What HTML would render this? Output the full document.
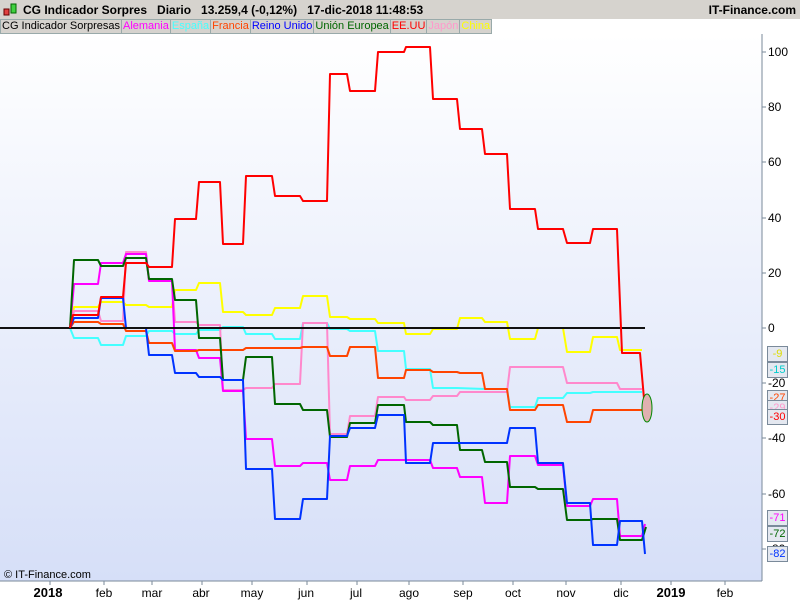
<!DOCTYPE html><html><head><style>
body{margin:0;width:800px;height:600px;overflow:hidden;font-family:"Liberation Sans",sans-serif;background:#fff;position:relative}
.t{position:absolute;left:0;top:0;width:800px;height:19px;background:#d6d3ce;font-size:12px}
.lg{position:absolute;left:0;top:19px;height:15px;font-size:11px;display:flex;background:#d6d3ce}
.lg span{border:1px solid #9aa;border-left:none;padding:0 1px;line-height:13px;background:#d6d3ce}
.lab{position:absolute;left:767px;width:19px;height:14px;border:1px solid #7a8a9a;background:#e4e8f0;font-size:11px;line-height:14px;text-align:center}
</style></head><body>
<div class="t"><svg style="position:absolute;left:3px;top:2px" width="14" height="16"><rect x="1" y="7" width="5" height="6" fill="#e04040" stroke="#600"/><rect x="8" y="2" width="5" height="9" fill="#40d040" stroke="#060"/></svg>
<b style="position:absolute;left:23px;top:3px;font-weight:bold">CG Indicador Sorpres&nbsp;&nbsp;&nbsp;Diario&nbsp;&nbsp;&nbsp;13.259,4 (-0,12%)&nbsp;&nbsp;&nbsp;17-dic-2018 11:48:53</b>
<b style="position:absolute;right:4px;top:3px">IT-Finance.com</b></div>
<div class="lg"><span style="border-left:1px solid #9aa">CG Indicador Sorpresas</span><span style="color:#f0f">Alemania</span><span style="color:#4ff">España</span><span style="color:#f40">Francia</span><span style="color:#00f">Reino Unido</span><span style="color:#060">Unión Europea</span><span style="color:#f00">EE.UU</span><span style="color:#f9c">Japón</span><span style="color:#ff0">China</span></div>
<svg style="position:absolute;left:0;top:34px" width="800" height="566">
<defs><linearGradient id="g" x1="0" y1="0" x2="0" y2="1"><stop offset="0" stop-color="#fff"/><stop offset="1" stop-color="#d6dff8"/></linearGradient></defs>
<g transform="translate(0,-34)">
<rect x="0" y="34" width="762" height="547" fill="url(#g)"/>
<line x1="762" y1="34" x2="762" y2="581" stroke="#7a8a9a"/>
<line x1="0" y1="581" x2="762" y2="581" stroke="#7a8a9a"/>
<g fill="none" stroke-width="2" stroke-linejoin="round">
<polyline stroke="#ffff00" points="0,328 70,328 74,307 98,307 101,302 123,302 126,305 146,305 149,307 172,307 175,290 196,290 199,283 220,283 223,312 243,312 246,315 272,315 275,308 300,308 303,296 327,296 330,317 347,317 350,319 375,319 378,323 404,323 406,334 430,334 433,329 457,329 460,318 482,318 485,322 507,322 510,339 535,339 538,328 563,328 567,352 590,352 593,337 617,337 620,350 642,350"/>
<polyline stroke="#44ffff" points="70,328 74,338 98,338 101,345 123,345 126,336 146,336 149,331 172,331 175,334 196,334 199,330 220,330 223,327 243,327 246,334 272,334 275,339 300,339 303,323 327,323 330,329 347,329 350,331 375,331 378,351 404,351 406,369 430,369 433,388 457,388 485,389 507,389 510,407 535,407 538,398 563,398 567,393 590,393 593,392 642,392"/>
<polyline stroke="#ff88cc" points="70,328 74,311 98,311 101,321 123,321 126,252 146,252 149,280 172,280 175,322 196,322 199,325 220,325 223,390 243,390 246,388 272,388 275,384 300,384 303,323 327,323 330,434 347,434 350,416 375,416 378,397 404,397 406,400 430,400 433,396 457,396 460,392 507,392 510,367 563,367 567,383 617,383 620,389 642,389"/>
<polyline stroke="#ff00ff" points="70,328 74,284 98,284 101,263 123,263 126,254 146,254 149,281 172,281 175,350 196,350 199,358 220,358 223,391 243,391 246,439 272,439 275,466 300,466 303,463 327,463 330,480 347,480 350,466 375,466 378,460 430,460 433,468 457,468 460,477 482,477 485,503 507,503 510,456 535,456 538,465 563,465 567,506 590,506 593,499 617,499 620,536 642,536 645,524"/>
<polyline stroke="#ff4400" points="70,328 74,322 98,322 101,324 123,324 126,331 146,331 149,343 172,343 175,351 196,351 199,350 243,350 246,348 300,348 303,347 327,347 330,356 347,356 350,347 375,347 378,378 404,378 406,370 430,370 433,372 457,372 460,373 482,373 485,389 507,389 510,410 535,410 538,405 563,405 567,422 590,422 593,410 642,410"/>
<polyline stroke="#006600" points="70,328 74,260 98,260 101,266 123,266 126,258 146,258 149,279 172,279 175,300 196,300 199,338 220,338 223,380 243,380 246,357 272,357 275,404 300,404 303,410 327,410 330,437 347,437 350,423 375,423 378,405 404,405 406,422 430,422 433,425 457,425 460,450 482,450 485,462 507,462 510,487 535,487 538,489 563,489 567,520 590,520 593,519 617,519 620,540 642,540 646,527"/>
<polyline stroke="#0033ff" points="70,328 74,318 98,318 101,298 123,298 126,328 146,328 149,355 172,355 175,373 196,373 199,377 220,377 223,380 243,380 246,469 272,469 275,519 300,519 303,499 327,499 330,436 347,436 350,428 375,428 378,415 404,415 406,463 430,463 433,443 507,443 510,428 535,428 538,463 563,463 567,503 590,503 593,545 617,545 620,521 642,521 645,554"/>
<polyline stroke="#111" points="0,328 645,328"/>
<polyline stroke="#ff0000" points="70,328 73,315 98,315 101,297 123,297 126,263 146,263 149,267 172,267 175,219 196,219 199,182 220,182 223,244 243,244 246,176 272,176 275,196 300,196 303,201 327,201 330,74 347,74 350,91 375,91 378,52 404,52 406,47 430,47 433,99 457,99 460,129 482,129 485,154 507,154 510,209 535,209 538,229 563,229 567,243 590,243 593,229 617,229 622,353 640,353 645,410"/>
</g>
<ellipse cx="647" cy="408" rx="5" ry="14" fill="#e0b0b0" stroke="#080"/>
<g stroke="#7a8a9a"><line x1="762" y1="52" x2="766" y2="52"/><line x1="762" y1="107" x2="766" y2="107"/><line x1="762" y1="162" x2="766" y2="162"/><line x1="762" y1="218" x2="766" y2="218"/><line x1="762" y1="273" x2="766" y2="273"/><line x1="762" y1="328" x2="766" y2="328"/><line x1="762" y1="383" x2="766" y2="383"/><line x1="762" y1="438" x2="766" y2="438"/><line x1="762" y1="494" x2="766" y2="494"/><line x1="762" y1="549" x2="766" y2="549"/>
<line x1="50" y1="581" x2="50" y2="585"/><line x1="104" y1="581" x2="104" y2="585"/><line x1="152" y1="581" x2="152" y2="585"/><line x1="202" y1="581" x2="202" y2="585"/><line x1="252" y1="581" x2="252" y2="585"/><line x1="307" y1="581" x2="307" y2="585"/><line x1="357" y1="581" x2="357" y2="585"/><line x1="409" y1="581" x2="409" y2="585"/><line x1="463" y1="581" x2="463" y2="585"/><line x1="513" y1="581" x2="513" y2="585"/><line x1="566" y1="581" x2="566" y2="585"/><line x1="621" y1="581" x2="621" y2="585"/><line x1="671" y1="581" x2="671" y2="585"/><line x1="725" y1="581" x2="725" y2="585"/></g>
<g font-size="12" fill="#000" font-family="Liberation Sans,sans-serif">
<text x="768" y="56">100</text><text x="768" y="111">80</text><text x="768" y="166">60</text><text x="768" y="222">40</text><text x="768" y="277">20</text><text x="768" y="332">0</text><text x="768" y="387">-20</text><text x="768" y="442">-40</text><text x="768" y="498">-60</text><text x="768" y="553">-80</text>
<text x="4" y="578" font-size="11">© IT-Finance.com</text>
<g text-anchor="middle"><text x="48" y="597" font-weight="bold" font-size="13">2018</text><text x="104" y="597">feb</text><text x="152" y="597">mar</text><text x="201" y="597">abr</text><text x="252" y="597">may</text><text x="306" y="597">jun</text><text x="356" y="597">jul</text><text x="409" y="597">ago</text><text x="463" y="597">sep</text><text x="513" y="597">oct</text><text x="566" y="597">nov</text><text x="621" y="597">dic</text><text x="671" y="597" font-weight="bold" font-size="13">2019</text><text x="725" y="597">feb</text></g>
</g></g></svg>
<div class="lab" style="top:346px;color:#dd0">-9</div>
<div class="lab" style="top:362px;color:#0cc">-15</div>
<div class="lab" style="top:390px;color:#f40">-27</div>
<div class="lab" style="top:400px;color:#f9c">-29</div>
<div class="lab" style="top:409px;color:#f00">-30</div>
<div class="lab" style="top:510px;color:#f0f">-71</div>
<div class="lab" style="top:526px;color:#060">-72</div>
<div class="lab" style="top:546px;color:#03f">-82</div>
</body></html>
